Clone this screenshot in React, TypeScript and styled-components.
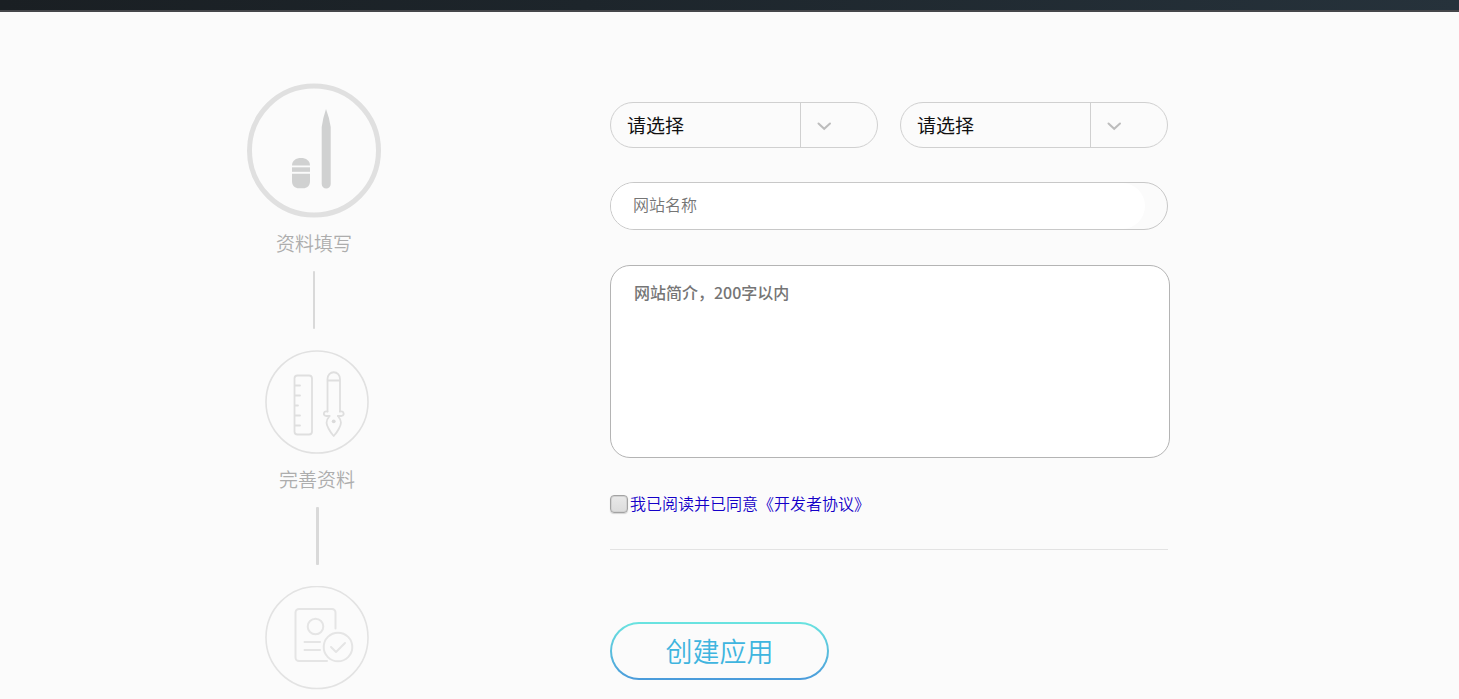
import React from "react";
import styled, { createGlobalStyle } from "styled-components";

const GlobalStyle = createGlobalStyle`
  *, *::before, *::after { box-sizing: border-box; }
  body {
    margin: 0;
    background: #fbfbfb;
    font-family: "Liberation Sans", "Noto Sans CJK SC", sans-serif;
    font-size: 16px;
  }
  button, input, select, textarea { font-family: inherit; }
`;

const TopBar = styled.header`
  height: 12px;
  background: linear-gradient(90deg, #1a1f23, #1d252b 40%, #26323b);
  border-bottom: 2px solid #45464a;
`;

const Main = styled.main`
  display: grid;
  grid-template-columns: 363px minmax(0, 560px);
  max-width: 965px;
  margin: 0 auto;
  padding-top: 71px;
`;

const Steps = styled.ol`
  list-style: none;
  margin: 0;
  padding: 0;
  display: flex;
  flex-direction: column;
  align-items: flex-start;
  gap: 21px;
`;

const Step = styled.li<{ $current?: boolean }>`
  width: ${(p) => (p.$current ? 134 : 140)}px;
  display: flex;
  flex-direction: column;
  align-items: center;
`;

const StepIcon = styled.svg<{ $size: number }>`
  display: block;
  width: ${(p) => p.$size}px;
  height: ${(p) => p.$size}px;
  flex: none;
  fill: none;
`;

const StepLabel = styled.span`
  margin-top: 11px;
  font-family: "Noto Sans CJK SC", sans-serif;
  font-size: 19px;
  font-weight: 350;
  line-height: 28px;
  color: #adadad;
`;

const Connector = styled.span<{ $thick?: boolean }>`
  width: ${(p) => (p.$thick ? 3 : 2)}px;
  height: 58px;
  margin-top: 14px;
  border-radius: 1px;
  background: #d9d9d9;
`;

const Form = styled.form`
  display: flex;
  flex-direction: column;
  align-items: flex-start;
  padding-top: 19px;
`;

const SelectRow = styled.div`
  display: grid;
  grid-template-columns: 1fr 1fr;
  gap: 22px;
  width: calc(100% - 2px);
`;

const SelectBox = styled.div`
  position: relative;
  height: 46px;
`;

const Select = styled.select`
  appearance: none;
  width: 100%;
  height: 100%;
  padding: 2px 80px 0 16px;
  border: 1px solid #d0d0d0;
  border-radius: 23px;
  background: transparent;
  color: #111;
  font-size: 19px;
`;

const SelectArrow = styled.span`
  position: absolute;
  inset: 1px 0 1px auto;
  width: 78px;
  padding: 1px 0 0 16px;
  border-left: 1px solid #d0d0d0;
  display: flex;
  align-items: center;
  pointer-events: none;
`;

const NameBox = styled.div`
  width: calc(100% - 2px);
  height: 48px;
  margin-top: 34px;
  padding-right: 22px;
  border: 1px solid #c8c8c8;
  border-radius: 24px;
`;

const NameInput = styled.input`
  display: block;
  width: 100%;
  height: 100%;
  padding: 0 22px;
  border: 0;
  border-radius: 23px;
  background: #fff;
  font-size: 16px;
  &::placeholder { color: #757575; font-weight: 350; }
`;

const Intro = styled.textarea`
  display: block;
  width: 100%;
  height: 193px;
  margin-top: 35px;
  padding: 14px 23px;
  border: 1px solid #b4b4b4;
  border-radius: 20px;
  background: #fff;
  font-family: "Noto Sans CJK SC", sans-serif;
  font-size: 16px;
  line-height: 24px;
  resize: none;
  &::placeholder { color: #757575; font-weight: 500; }
`;

const Agreement = styled.div`
  display: flex;
  align-items: center;
  gap: 2px;
  height: 24px;
  margin-top: 34px;
`;

const Checkbox = styled.input`
  appearance: none;
  width: 18px;
  height: 18px;
  margin: 0;
  border: 1px solid #a3a3a3;
  border-radius: 4px;
  background: linear-gradient(#e9e9e9, #dcdcdc);
  box-shadow: inset 0 0 0 1px #d2d2d2, 0 1px 1px #d4d4d4;
  &:checked { background: #4a4ad0; }
`;

const AgreementLink = styled.a`
  color: #1400c8;
  font-family: "Noto Sans CJK SC", sans-serif;
  font-weight: 350;
  line-height: 24px;
  padding-bottom: 2px;
  text-decoration: none;
`;

const Divider = styled.hr`
  width: calc(100% - 2px);
  height: 1px;
  margin: 33px 0 72px;
  border: 0;
  background: #e3e3e3;
`;

const CreateButton = styled.button`
  width: 219px;
  height: 58px;
  padding: 0 0 2px;
  border: 2px solid transparent;
  border-radius: 29px;
  background:
    linear-gradient(#fbfbfb, #fbfbfb) padding-box,
    linear-gradient(#6ae4e0, #4a9bdb) border-box;
  color: #3fb5df;
  font-size: 27px;
  font-weight: 350;
`;

function Chooser({ label }: { label: string }) {
  return (
    <SelectBox>
      <Select aria-label={label} defaultValue="">
        <option value="">请选择</option>
      </Select>
      <SelectArrow>
        <svg width="15" height="10" viewBox="0 0 15 10" fill="none" aria-hidden="true">
          <path d="M1.500 2.500l5.700 5.300L13 2.500" stroke="#bdbdbd" strokeWidth="2" strokeLinecap="round" />
        </svg>
      </SelectArrow>
    </SelectBox>
  );
}

export default function App() {
  return (
    <>
      <GlobalStyle />
      <TopBar />
      <Main>
        <Steps>
          <Step $current aria-current="step">
            <StepIcon $size={135} viewBox="0 0 135 135" aria-hidden="true">
              <circle cx="67" cy="67.5" r="64.5" stroke="#e0e0e0" strokeWidth="5" />
              <g fill="#d0d1d1">
                <path d="M79 26q3.500 9 4.700 18v57a4.500 4.500 0 0 1-9 0V44q1.200-9 4.300-18z" />
                <path d="M45 82.500c0-5 4-7.500 9-7.500s9 2.500 9 7.500z" />
                <path d="M45 84.300h18v4.500H45z" />
                <path d="M45 90.800h18V98c0 5-3 7.300-7 7.300h-4c-4 0-7-2.300-7-7.300z" />
              </g>
            </StepIcon>
            <StepLabel>资料填写</StepLabel>
            <Connector />
          </Step>
          <Step>
            <StepIcon $size={104} viewBox="0 0 104 104" aria-hidden="true">
              <circle cx="52" cy="52" r="51" stroke="#e1e1e1" strokeWidth="1.600" />
              <g stroke="#dfdfdf" strokeWidth="1.800" strokeLinecap="round" strokeLinejoin="round">
                <rect x="29.500" y="25.500" width="17.500" height="59" rx="3" />
                <path d="M30 35.500h5M30 45.500h5M30 55.500h3M30 65.500h5M30 75.500h5" />
                <path d="M62.500 61.500V29a6 6.500 0 0 1 12.500 0v32.500M62.500 30.500H75" />
                <path d="M62.500 61.500c-4-1-5 3.500-1.500 4.500h3.500M75 61.500c4-1 5 3.500 1.500 4.500H73" />
                <path d="M64.500 66c-4 5-3.500 8-1 12.500q2 4 5.200 7.500 3.300-3.500 5.300-7.500c2.500-4.500 3-7.500-1-12.500" />
              </g>
              <circle cx="68.700" cy="71.300" r="1.900" fill="#dadada" />
            </StepIcon>
            <StepLabel>完善资料</StepLabel>
            <Connector $thick />
          </Step>
          <Step>
            <StepIcon $size={104} viewBox="0 0 104 104" aria-hidden="true">
              <circle cx="52" cy="51.500" r="51" stroke="#e3e3e3" strokeWidth="1.600" />
              <g stroke="#e5e5e5" strokeWidth="2" strokeLinecap="round" strokeLinejoin="round">
                <path d="M62 75H34a3.500 3.500 0 0 1-3.500-3.500V26.500a3.500 3.500 0 0 1 3.500-3.500h33a3.500 3.500 0 0 1 3.500 3.500v16" />
                <circle cx="50.500" cy="40.500" r="7.800" />
                <path d="M39.500 56H55M39.500 64H55M66 61l5 5 9-9" />
                <circle cx="73" cy="61" r="14.300" />
              </g>
            </StepIcon>
          </Step>
        </Steps>
        <Form onSubmit={(e) => e.preventDefault()}>
          <SelectRow>
            <Chooser label="一级分类" />
            <Chooser label="二级分类" />
          </SelectRow>
          <NameBox>
            <NameInput type="text" aria-label="网站名称" placeholder="网站名称" />
          </NameBox>
          <Intro aria-label="网站简介" placeholder="网站简介，200字以内" maxLength={200} />
          <Agreement>
            <Checkbox type="checkbox" id="agree" aria-labelledby="agreement" />
            <AgreementLink id="agreement" href="#agreement">我已阅读并已同意《开发者协议》</AgreementLink>
          </Agreement>
          <Divider />
          <CreateButton type="submit">创建应用</CreateButton>
        </Form>
      </Main>
    </>
  );
}
